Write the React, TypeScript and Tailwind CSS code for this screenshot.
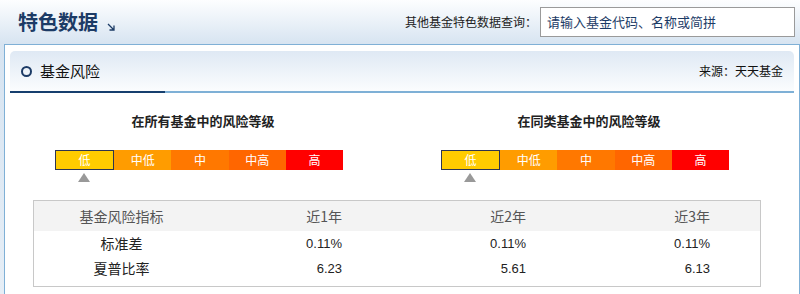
import React from "react";

const cjk = { fontFamily: '"Noto Sans CJK SC", "Liberation Sans", sans-serif' };
const num = { fontFamily: '"Liberation Sans", "Noto Sans CJK SC", sans-serif' };

const segs = [
  { t: "低", c: "bg-[#ffcc00]", sel: true },
  { t: "中低", c: "bg-[#ff9c00]" },
  { t: "中", c: "bg-[#ff7800]" },
  { t: "中高", c: "bg-[#ff6600]" },
  { t: "高", c: "bg-[#ff0000]" },
];

function RiskBlock({ title }: { title: string }) {
  return (
    <div className="w-[386px] flex flex-col">
      <div className="h-[18px] text-center text-[13px] font-bold leading-[18px] text-[#222]" style={cjk}>
        {title}
      </div>
      <div className="ml-[45px] mt-[20px] flex h-[20px] w-[288px]">
        {segs.map((s) => (
          <div
            key={s.t}
            className={`flex h-[20px] flex-1 items-center justify-center text-[12px] leading-none text-white ${s.c} ${
              s.sel ? "border border-[#2d3550]" : ""
            }`}
            style={cjk}
          >
            {s.t}
          </div>
        ))}
      </div>
      <div className="ml-[45px] mt-[3px] flex w-[58px] justify-center">
        <div className="h-0 w-0 border-x-[6px] border-b-[9px] border-x-transparent border-b-[#999]" />
      </div>
    </div>
  );
}

export default function App() {
  const rows = [
    { k: "标准差", v: ["0.11%", "0.11%", "0.11%"] },
    { k: "夏普比率", v: ["6.23", "5.61", "6.13"] },
  ];
  return (
    <div className="h-[294px] w-[800px] overflow-hidden bg-[linear-gradient(to_bottom,#fdfeff_0px,#d7e4f1_44px,#e6eef6_294px)]" style={cjk}>
      {/* top header */}
      <div className="flex h-[44px] items-center">
        <div className="ml-[18px] text-[20px] font-bold leading-none text-[#1c3b66]">特色数据</div>
        <svg className="ml-[9px] mt-[10px]" width="8" height="8" viewBox="0 0 8 8">
          <path d="M1 1 L7 7 M7 2.5 L7 7 L2.5 7" stroke="#1c3b66" strokeWidth="1.3" fill="none" />
        </svg>
        <div className="ml-auto text-[12px] text-[#222]">其他基金特色数据查询：</div>
        <div className="ml-[3px] mr-[5px] flex h-[30px] w-[255px] items-center border border-[#9a9a9a] bg-white pl-[6px] text-[13px] text-[#1c3b66]">
          请输入基金代码、名称或简拼
        </div>
      </div>
      {/* panel */}
      <div className="ml-[4px] h-[250px] border-l border-r border-t border-[#7fb0d6] bg-white">
        <div className="mx-[5px] mt-[6px]">
          <div className="flex h-[40px] items-center rounded-t-[5px] bg-[linear-gradient(to_bottom,#dfe9f4,#fbfdfe)]">
            <div className="ml-[11px] h-[11px] w-[11px] rounded-full border-2 border-[#1c3b66]" />
            <div className="ml-[8px] text-[15px] text-[#111]">基金风险</div>
            <div className="ml-auto mr-[11px] text-[12px] text-[#111]">来源：天天基金</div>
          </div>
          <div className="flex h-[2px]">
            <div className="w-[155px] bg-[#163f6e]" />
            <div className="flex-1 bg-[#7eb0d6]" />
          </div>
        </div>
        <div className="ml-[5px] mt-[19px] flex">
          <RiskBlock title="在所有基金中的风险等级" />
          <RiskBlock title="在同类基金中的风险等级" />
        </div>
        <div className="ml-[28px] mt-[18px] w-[728px] border border-[#c8c8c8] pb-[5px]">
          <div className="grid h-[30px] grid-cols-[175px_184px_184px_1fr] items-center bg-[#f3f3f3] text-[14px] text-[#555]">
            <div className="text-center">基金风险指标</div>
            <div className="pr-[51px] text-right">近1年</div>
            <div className="pr-[51px] text-right">近2年</div>
            <div className="pr-[50px] text-right">近3年</div>
          </div>
          {rows.map((r) => (
            <div key={r.k} className="grid h-[25px] grid-cols-[175px_184px_184px_1fr] items-center text-[#222]">
              <div className="text-center text-[14px]">{r.k}</div>
              {r.v.map((v, i) => (
                <div key={i} className={`text-right text-[13px] ${i === 2 ? "pr-[50px]" : "pr-[51px]"}`} style={num}>
                  {v}
                </div>
              ))}
            </div>
          ))}
        </div>
      </div>
    </div>
  );
}
